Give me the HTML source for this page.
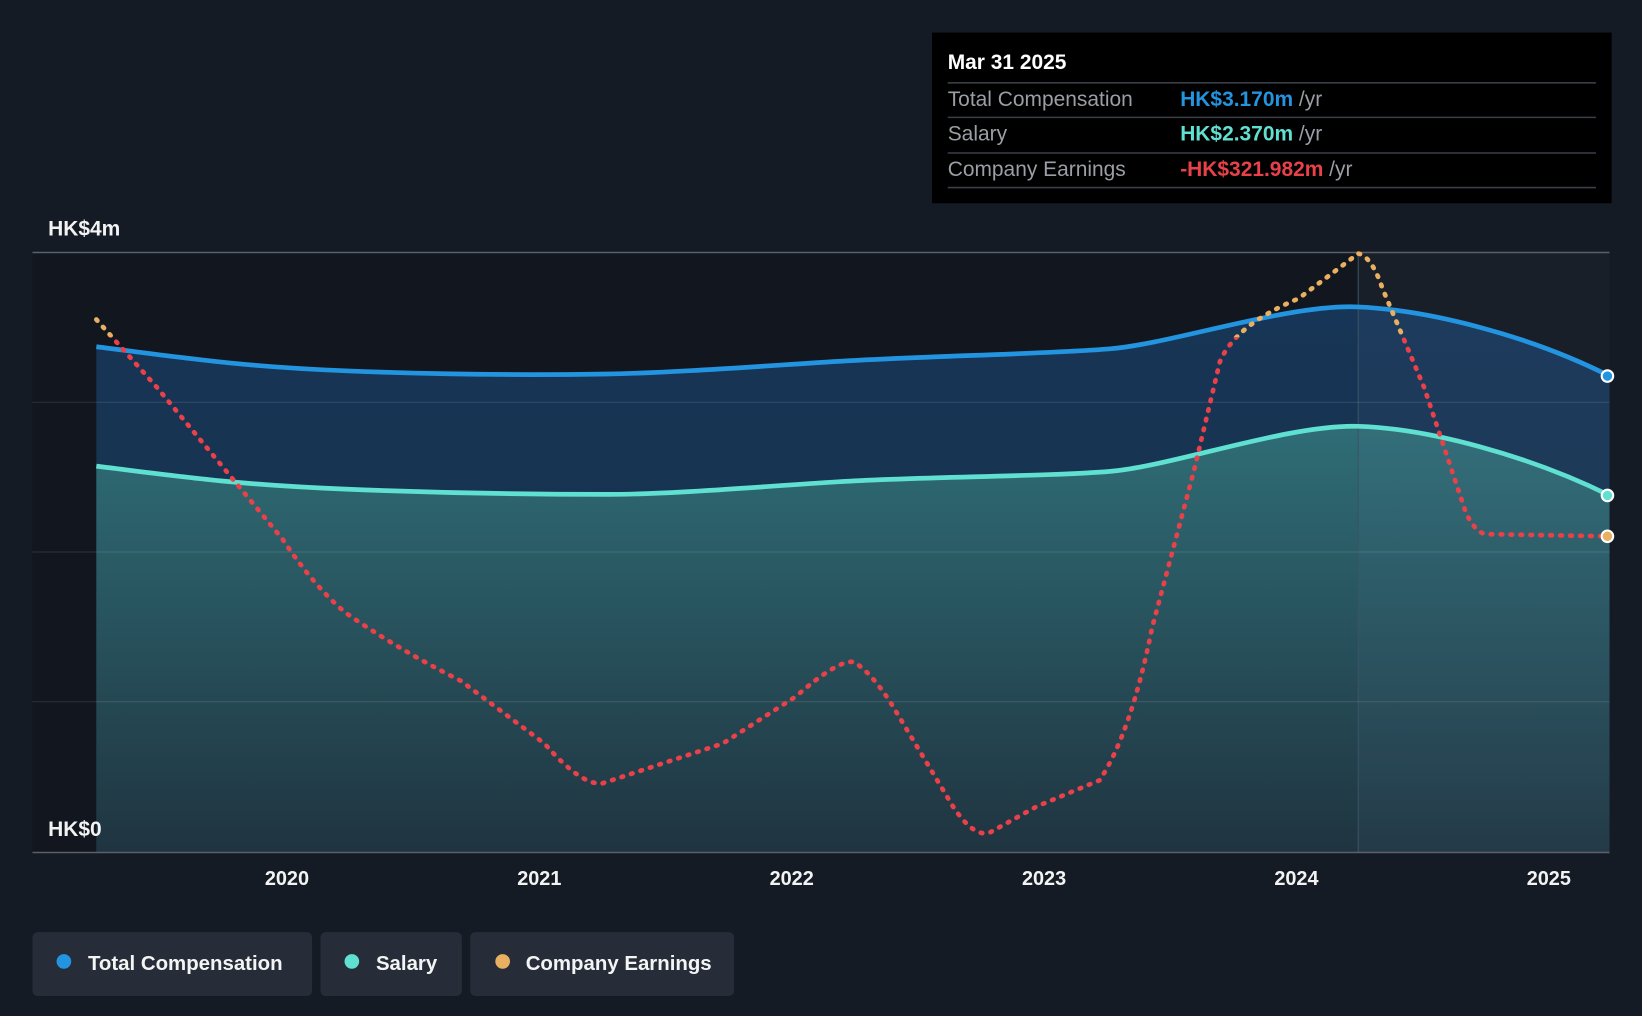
<!DOCTYPE html>
<html><head><meta charset="utf-8"><style>
html,body{margin:0;padding:0;background:#151b24;}
svg{display:block;font-family:"Liberation Sans",Arial,sans-serif;}
</style></head><body>
<svg width="1642" height="1016" viewBox="0 0 1568 970" xmlns="http://www.w3.org/2000/svg">
<defs>
<linearGradient id="sal" x1="0" y1="0" x2="0" y2="1">
<stop offset="0" stop-color="#2f6d76"/><stop offset="1" stop-color="#1f3440"/>
</linearGradient>
<linearGradient id="tot" x1="0" y1="0" x2="0" y2="1">
<stop offset="0" stop-color="#173556"/><stop offset="1" stop-color="#163048"/>
</linearGradient>
<clipPath id="top"><rect x="0" y="0" width="1568" height="322"/></clipPath>
<clipPath id="bot"><rect x="0" y="322" width="1568" height="700"/></clipPath>
</defs>
<rect width="1568" height="970" fill="#151b24"/>
<rect x="31" y="241" width="1506" height="573" fill="#12161e"/>
<path d="M92,331 C180,342 230,350 330,354 S520,358 580,357 S720,350 800,345 S1000,338 1060,333 S1230,290 1297,293 S1460,320 1537,359 L1537,814 L92,814 Z" fill="url(#tot)"/>
<path d="M92,445 C180,456 230,463 330,467 S520,472 580,472 S720,465 800,460 S1000,455 1060,450 S1230,405 1297,407 S1460,435 1537,473 L1537,814 L92,814 Z" fill="url(#sal)"/>
<rect x="1297" y="241" width="240" height="573" fill="#6a8fb0" opacity="0.08"/>
<line x1="1297" y1="241" x2="1297" y2="814" stroke="#3a5366" stroke-width="1"/>
<g stroke="#ffffff" stroke-opacity="0.12" stroke-width="1">
<line x1="31" y1="384" x2="1537" y2="384"/><line x1="31" y1="527" x2="1537" y2="527"/><line x1="31" y1="670" x2="1537" y2="670"/>
</g>
<line x1="31" y1="241" x2="1537" y2="241" stroke="#5a616b" stroke-width="1.5"/>
<line x1="31" y1="814" x2="1537" y2="814" stroke="#5a616b" stroke-width="1.5"/>
<path d="M92,331 C180,342 230,350 330,354 S520,358 580,357 S720,350 800,345 S1000,338 1060,333 S1230,290 1297,293 S1460,320 1537,359" fill="none" stroke="#2394e0" stroke-width="4.5"/>
<path d="M92,445 C180,456 230,463 330,467 S520,472 580,472 S720,465 800,460 S1000,455 1060,450 S1230,405 1297,407 S1460,435 1537,473" fill="none" stroke="#5fe0d0" stroke-width="4.5"/>
<g fill="none" stroke-width="4.5" stroke-dasharray="1.5 8" stroke-linecap="round">
<path d="M92,305 L150,370 L270,515 Q300,560 330,585 Q380,620 440,650 L520,710 Q555,750 575,748 L690,710 L760,665 Q800,630 815,632 Q830,640 850,670 L910,770 Q930,800 945,795 L990,770 L1050,745 Q1080,700 1100,600 L1140,450 L1165,345 Q1180,310 1240,285 Q1280,255 1297,242 Q1310,245 1320,275 L1360,370 L1400,490 Q1410,510 1420,510 L1537,512" stroke="#e8414a" clip-path="url(#bot)"/>
<path d="M92,305 L150,370 L270,515 Q300,560 330,585 Q380,620 440,650 L520,710 Q555,750 575,748 L690,710 L760,665 Q800,630 815,632 Q830,640 850,670 L910,770 Q930,800 945,795 L990,770 L1050,745 Q1080,700 1100,600 L1140,450 L1165,345 Q1180,310 1240,285 Q1280,255 1297,242 Q1310,245 1320,275 L1360,370 L1400,490 Q1410,510 1420,510 L1537,512" stroke="#e8b060" clip-path="url(#top)"/>
</g>
<circle cx="1535" cy="359" r="5.5" fill="#2394e0" stroke="#fff" stroke-width="2"/>
<circle cx="1535" cy="473" r="5.5" fill="#5fe0d0" stroke="#fff" stroke-width="2"/>
<circle cx="1535" cy="512" r="5.5" fill="#e8b060" stroke="#fff" stroke-width="2"/>
<g fill="#fff" font-size="20" font-weight="bold" opacity="0.95">
<text x="46" y="225">HK$4m</text>
<text x="46" y="798">HK$0</text>
</g>
<g fill="#fff" font-size="19" font-weight="bold" text-anchor="middle" opacity="0.95">
<text x="274" y="845">2020</text><text x="515" y="845">2021</text><text x="756" y="845">2022</text>
<text x="997" y="845">2023</text><text x="1238" y="845">2024</text><text x="1479" y="845">2025</text>
</g>
<rect x="890" y="31" width="649" height="163" fill="#000"/>
<text x="905" y="66" fill="#fff" font-size="20" font-weight="bold">Mar 31 2025</text>
<g stroke="#3a3f47" stroke-width="1.5">
<line x1="905" y1="79" x2="1524" y2="79"/><line x1="905" y1="112" x2="1524" y2="112"/><line x1="905" y1="146" x2="1524" y2="146"/><line x1="905" y1="179" x2="1524" y2="179"/>
</g>
<g font-size="20">
<text x="905" y="101" fill="#9a9ea5">Total Compensation</text>
<text x="1127" y="101" fill="#2394e0" font-weight="bold">HK$3.170m <tspan fill="#9a9ea5" font-weight="normal">/yr</tspan></text>
<text x="905" y="134" fill="#9a9ea5">Salary</text>
<text x="1127" y="134" fill="#5fe0d0" font-weight="bold">HK$2.370m <tspan fill="#9a9ea5" font-weight="normal">/yr</tspan></text>
<text x="905" y="168" fill="#9a9ea5">Company Earnings</text>
<text x="1127" y="168" fill="#e8414a" font-weight="bold">-HK$321.982m <tspan fill="#9a9ea5" font-weight="normal">/yr</tspan></text>
</g>
<rect x="31" y="890" width="267" height="61" rx="5" fill="#262d38"/>
<rect x="306" y="890" width="135" height="61" rx="5" fill="#262d38"/>
<rect x="449" y="890" width="252" height="61" rx="5" fill="#262d38"/>
<circle cx="61" cy="918" r="7" fill="#2394e0"/><circle cx="336" cy="918" r="7" fill="#5fe0d0"/><circle cx="480" cy="918" r="7" fill="#e8b060"/>
<g fill="#fff" font-size="19.5" font-weight="bold" opacity="0.95">
<text x="84" y="926">Total Compensation</text><text x="359" y="926">Salary</text><text x="502" y="926">Company Earnings</text>
</g>
</svg>
</body></html>
